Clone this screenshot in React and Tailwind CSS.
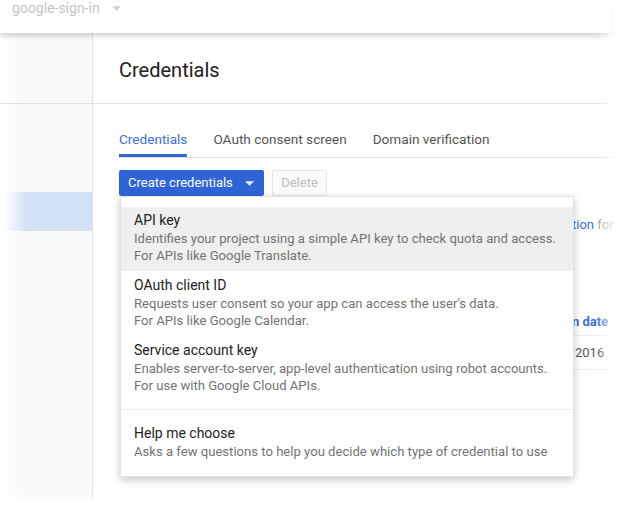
import React from "react";

const items = [
  {
    title: "API key",
    lines: [
      "Identifies your project using a simple API key to check quota and access.",
      "For APIs like Google Translate.",
    ],
    active: true,
  },
  {
    title: "OAuth client ID",
    lines: [
      "Requests user consent so your app can access the user's data.",
      "For APIs like Google Calendar.",
    ],
  },
  {
    title: "Service account key",
    lines: [
      "Enables server-to-server, app-level authentication using robot accounts.",
      "For use with Google Cloud APIs.",
    ],
  },
];

function Caret({ className }) {
  return (
    <svg width="9" height="5" viewBox="0 0 10 5" className={className}>
      <path d="M0 0 L10 0 L5 5 Z" fill="currentColor" />
    </svg>
  );
}

export default function App() {
  return (
    <div className="relative w-[618px] h-[506px] overflow-hidden bg-white font-['Roboto',sans-serif]">
      {/* header */}
      <header className="relative z-10 h-[33px] bg-white shadow-[0_3px_5px_rgba(0,0,0,0.18)] mr-[6px] flex items-start pl-[12px]">
        <span className="text-[14px] leading-[18px] -mt-[1px] text-[#c4c4c4]">google-sign-in</span>
        <Caret className="ml-[12px] mt-[6px] text-[#d0d0d0]" />
      </header>

      {/* title band */}
      <div className="flex h-[71px] border-b border-[#e2e2e2] mr-[8px]">
        <div className="w-[93px] shrink-0 border-r border-[#e2e2e2] bg-linear-to-r from-white to-[#f8f8f8] to-[30%]" />
        <div className="pl-[26px] pt-[3px] flex items-center text-[20px] text-[#212121]">Credentials</div>
      </div>

      {/* body */}
      <div className="flex h-[396px]">
        <div className="w-[93px] shrink-0 border-r border-[#e2e2e2] bg-linear-to-r from-white to-[#f8f8f8] to-[30%]">
          <div className="mt-[88px] h-[39px] bg-linear-to-r from-white from-[4%] to-[#d4e2f6] to-[28%]" />
        </div>

        <div className="flex-1 pl-[26px] text-[13px]">
          {/* tabs */}
          <div className="mt-[24px] mr-[8px] flex gap-[26px] border-b border-[#e0e0e0] leading-[20px] text-[13.6px]">
            <div className="pt-[1px] pb-[5px] border-b-[3px] border-[#3367d6] text-[#3b6fdc]">Credentials</div>
            <div className="pt-[1px] pb-[8px] text-[#555]">OAuth consent screen</div>
            <div className="pt-[1px] pb-[8px] text-[#555]">Domain verification</div>
          </div>

          {/* buttons */}
          <div className="relative mt-[12px] flex items-center gap-[8px]">
            <div className="h-[26px] w-[145px] rounded-[2px] bg-[#2f64d8] text-white flex items-center pl-[9px] pr-[10px] justify-between">
              <span className="text-[13px]">Create credentials</span>
              <Caret className="text-white/90" />
            </div>
            <div className="h-[26px] w-[55px] rounded-[2px] border border-[#e4e4e4] bg-[#fbfbfb] text-[#bcbcbc] flex items-center justify-center">
              Delete
            </div>

            {/* dropdown */}
            <div className="absolute z-20 left-[1px] top-full w-[454px] bg-white border border-[#e4e4e4] shadow-[0_3px_8px_rgba(0,0,0,0.22)] pt-[10px] pb-[16px]">
              {items.map((it) => (
                <div
                  key={it.title}
                  className={
                    it.active
                      ? "pl-[13px] pt-[3px] pb-[7px] bg-[#efefef]"
                      : "pl-[13px] pt-[4px] pb-[7px]"
                  }
                >
                  <div className="text-[14px] leading-[20px] text-[#222]">{it.title}</div>
                  {it.lines.map((l) => (
                    <div key={l} className="text-[13.1px] leading-[17px] text-[#737373] whitespace-nowrap">
                      {l}
                    </div>
                  ))}
                </div>
              ))}
              <div className="mt-[8px] border-t border-[#ececec]" />
              <div className="pl-[13px] pt-[13px]">
                <div className="text-[14px] leading-[20px] text-[#222]">Help me choose</div>
                <div className="text-[13.1px] leading-[17px] text-[#737373] whitespace-nowrap">
                  Asks a few questions to help you decide which type of credential to use
                </div>
              </div>
            </div>
          </div>

          {/* background content (mostly covered by dropdown) */}
          <div className="mt-[20px] pl-[453px] whitespace-nowrap leading-[18px] text-[13px]">
            <span className="text-[#3b6fdc]">tion</span>
            <span className="text-[#a0a0a0]"> for</span>
          </div>

          <div className="mt-[74px] mr-[8px]">
            <div className="h-[28px] flex items-center pl-[453px] border-b border-[#ececec] whitespace-nowrap overflow-hidden">
              <span className="font-bold text-[#3b6fdc]">n date</span>
              <Caret className="ml-[6px] text-[#d8d8d8]" />
            </div>
            <div className="h-[34px] flex items-center pl-[456px] border-b border-[#ececec] text-[#555] whitespace-nowrap overflow-hidden">
              2016
            </div>
          </div>
        </div>
      </div>

      {/* soft vignette edges */}
      <div className="pointer-events-none absolute right-0 top-0 bottom-0 w-[22px] bg-linear-to-l from-white to-transparent z-30" />
      <div className="pointer-events-none absolute left-0 right-0 bottom-0 h-[14px] bg-linear-to-t from-white to-transparent z-30" />
    </div>
  );
}
